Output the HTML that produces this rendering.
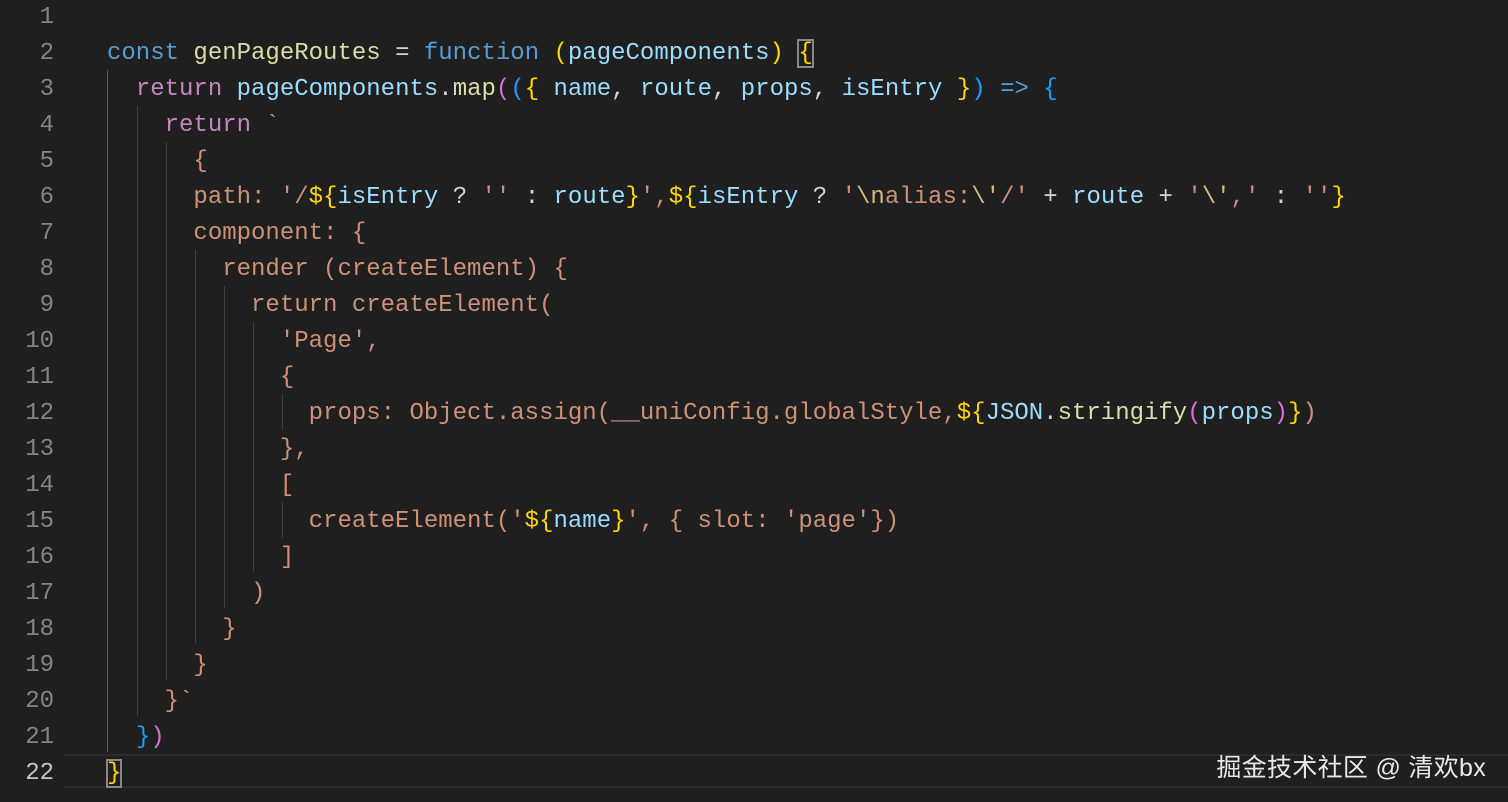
<!DOCTYPE html>
<html><head><meta charset="utf-8"><style>
html,body{margin:0;padding:0;background:#1f1f1f;width:1508px;height:802px;overflow:hidden}
body{position:relative;font-family:"Liberation Mono",monospace;font-size:24px}
.ln{position:absolute;left:0;width:54px;text-align:right;color:#858585;height:36px;line-height:36px;margin-top:2px}
.cur{color:#c6c6c6}
.l{position:absolute;left:107px;height:36px;line-height:36px;white-space:pre;color:#ce9178;margin-top:2px}
.hl{position:absolute;left:64px;right:0;top:754px;height:30px;border-top:2px solid #2c2c2c;border-bottom:2px solid #2c2c2c}
.g{position:absolute;width:1px;background:#404040}
.k{color:#569cd6}.f{color:#dcdcaa}.v{color:#9cdcfe}.r{color:#c586c0}.p{color:#d4d4d4}
.y{color:#ffd700}.m{color:#da70d6}.b{color:#179fff}.e{color:#d7ba7d}
.box{outline:2px solid #888;outline-offset:-1px}
.wm{position:absolute;right:22px;top:748px;color:#e8e8e8;font-family:"Liberation Sans","Noto Sans CJK SC",sans-serif;font-size:25px;letter-spacing:0.3px}
</style></head><body>
<div class="hl"></div>
<div class="ln" style="top:-2px">1</div><div class="ln" style="top:34px">2</div><div class="ln" style="top:70px">3</div><div class="ln" style="top:106px">4</div><div class="ln" style="top:142px">5</div><div class="ln" style="top:178px">6</div><div class="ln" style="top:214px">7</div><div class="ln" style="top:250px">8</div><div class="ln" style="top:286px">9</div><div class="ln" style="top:322px">10</div><div class="ln" style="top:358px">11</div><div class="ln" style="top:394px">12</div><div class="ln" style="top:430px">13</div><div class="ln" style="top:466px">14</div><div class="ln" style="top:502px">15</div><div class="ln" style="top:538px">16</div><div class="ln" style="top:574px">17</div><div class="ln" style="top:610px">18</div><div class="ln" style="top:646px">19</div><div class="ln" style="top:682px">20</div><div class="ln" style="top:718px">21</div><div class="ln cur" style="top:754px">22</div>

<div class="g" style="left:107px;top:70px;height:682px;background:#5a5a5a"></div>
<div class="g" style="left:137px;top:106px;height:610px"></div>
<div class="g" style="left:166px;top:142px;height:538px"></div>
<div class="g" style="left:195px;top:250px;height:394px"></div>
<div class="g" style="left:224px;top:286px;height:322px"></div>
<div class="g" style="left:253px;top:322px;height:250px"></div>
<div class="g" style="left:282px;top:394px;height:36px"></div>
<div class="g" style="left:282px;top:502px;height:36px"></div>

<div class="l" style="top:34px"><span class="k">const</span> <span class="f">genPageRoutes</span> <span class="p">=</span> <span class="k">function</span> <span class="y">(</span><span class="v">pageComponents</span><span class="y">)</span> <span class="y box">{</span></div>
<div class="l" style="top:70px">  <span class="r">return</span> <span class="v">pageComponents</span><span class="p">.</span><span class="f">map</span><span class="m">(</span><span class="b">(</span><span class="y">{</span> <span class="v">name</span><span class="p">,</span> <span class="v">route</span><span class="p">,</span> <span class="v">props</span><span class="p">,</span> <span class="v">isEntry</span> <span class="y">}</span><span class="b">)</span> <span class="k">=&gt;</span> <span class="b">{</span></div>
<div class="l" style="top:106px">    <span class="r">return</span> `</div>
<div class="l" style="top:142px">      {</div>
<div class="l" style="top:178px">      path: '/<span class="y">${</span><span class="v">isEntry</span> <span class="p">?</span> '' <span class="p">:</span> <span class="v">route</span><span class="y">}</span>',<span class="y">${</span><span class="v">isEntry</span> <span class="p">?</span> '<span class="e">\n</span>alias:<span class="e">\'</span>/' <span class="p">+</span> <span class="v">route</span> <span class="p">+</span> '<span class="e">\'</span>,' <span class="p">:</span> ''<span class="y">}</span></div>
<div class="l" style="top:214px">      component: {</div>
<div class="l" style="top:250px">        render (createElement) {</div>
<div class="l" style="top:286px">          return createElement(</div>
<div class="l" style="top:322px">            'Page',</div>
<div class="l" style="top:358px">            {</div>
<div class="l" style="top:394px">              props: Object.assign(__uniConfig.globalStyle,<span class="y">${</span><span class="v">JSON</span><span class="p">.</span><span class="f">stringify</span><span class="m">(</span><span class="v">props</span><span class="m">)</span><span class="y">}</span>)</div>
<div class="l" style="top:430px">            },</div>
<div class="l" style="top:466px">            [</div>
<div class="l" style="top:502px">              createElement('<span class="y">${</span><span class="v">name</span><span class="y">}</span>', { slot: 'page'})</div>
<div class="l" style="top:538px">            ]</div>
<div class="l" style="top:574px">          )</div>
<div class="l" style="top:610px">        }</div>
<div class="l" style="top:646px">      }</div>
<div class="l" style="top:682px">    }`</div>
<div class="l" style="top:718px">  <span class="b">}</span><span class="m">)</span></div>
<div class="l" style="top:754px"><span class="y box">}</span></div>
<div class="wm">掘金技术社区 @ 清欢bx</div>
</body></html>
